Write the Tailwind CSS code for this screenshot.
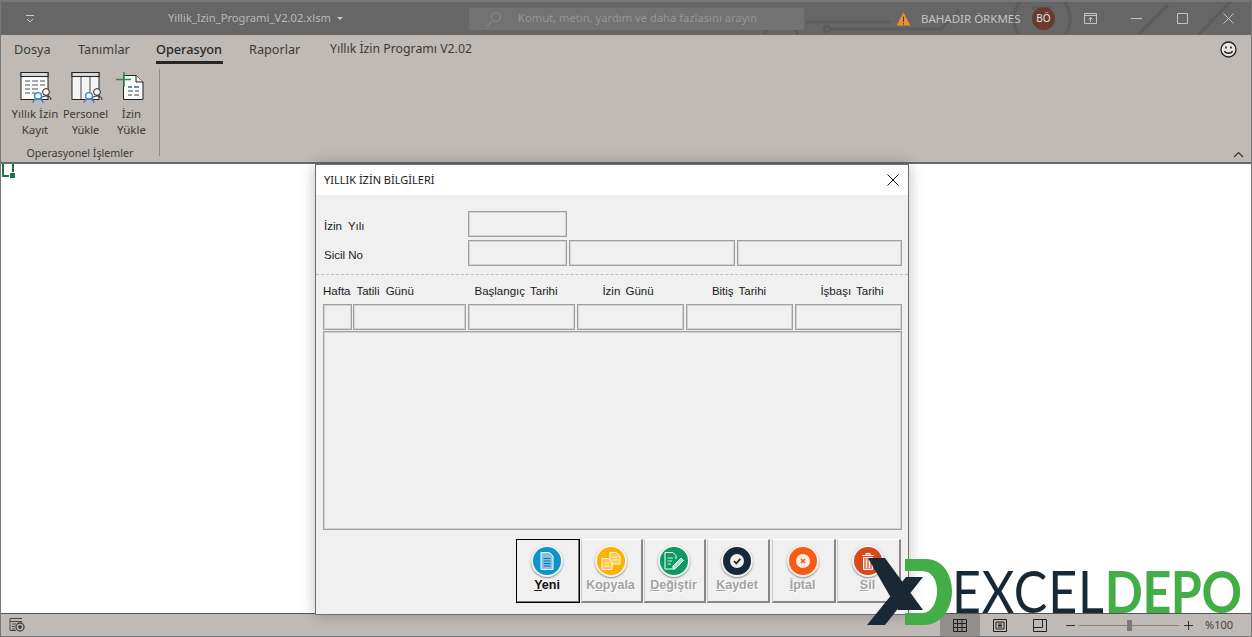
<!DOCTYPE html>
<html lang="tr">
<head>
<meta charset="UTF-8">
<title>Yillik_Izin_Programi_V2.02.xlsm</title>
<script src="https://cdn.jsdelivr.net/npm/@tailwindcss/browser@4"></script>
</head>
<body class="bg-white font-['Noto_Sans',sans-serif]">
<div class="relative w-[1252px] h-[637px] overflow-hidden flex flex-col border-x border-b border-[#777] bg-white">

  <!-- Title bar -->
  <header class="relative h-[35px] shrink-0 bg-[#666666] border-t-2 border-[#777] flex items-center text-[11.2px] text-[#b9b9b9]">
    <svg class="absolute left-[750px] top-0" width="501" height="33" fill="none" stroke="#5c5c5c" stroke-width="3">
      <path d="M55 20H140M13 33a18 18 0 0 1 34 0M78 27H190L208 8M268 33a28 28 0 1 1 46 0M280 6H298V24M387 33L417 3M447 33L498 -20"/>
      <circle cx="76" cy="27" r="3"/>
    </svg>
    <svg class="relative ml-[24px] shrink-0" width="10" height="10" fill="none" stroke="#c8c8c8"><path d="M1 1.5H9M2 5L5 8L8 5"/></svg>
    <span class="relative ml-[133px] w-[169px] shrink-0 whitespace-nowrap">Yillik_Izin_Programi_V2.02.xlsm</span>
    <svg class="relative shrink-0" width="6" height="4"><path d="M0 0H6L3 3Z" fill="#c8c8c8"/></svg>
    <div class="relative ml-[126px] w-[335px] h-[22px] shrink-0 bg-[#727272] flex items-center text-[#979797]">
      <svg class="ml-[17px] shrink-0" width="16" height="16" fill="none" stroke="#8c8c8c"><circle cx="10" cy="6" r="4.5"/><path d="M6.5 9.5L1 15"/></svg>
      <span class="ml-[16px] whitespace-nowrap">Komut, metin, yardım ve daha fazlasını arayın</span>
    </div>
    <svg class="relative ml-[92px] shrink-0" width="15" height="14"><path d="M7.5 0.5L14.5 13.5H0.5Z" fill="#e8902c"/><path d="M7 4.5H8V10H7ZM7 11H8V12.5H7Z" fill="#4a3a20"/></svg>
    <span class="relative ml-[10px] w-[100px] shrink-0 whitespace-nowrap text-[11.5px] text-[#c4c4c4]">BAHADIR ÖRKMES</span>
    <div class="relative ml-[11px] w-[23px] h-[23px] shrink-0 rounded-full bg-[#6b3a2e] flex items-center justify-center text-[10px] text-[#e4e4e4]">BÖ</div>
    <svg class="relative ml-[29px] shrink-0" width="13" height="11" fill="none" stroke="#c4c4c4"><path d="M0.5 0.5H12.5V10.5H0.5ZM0.5 2.5H12.5M6.5 9V4.5M4.5 6.5L6.5 4.5L8.5 6.5"/></svg>
    <svg class="relative ml-[34px] shrink-0" width="11" height="2"><path d="M0 0.5H11" stroke="#c4c4c4"/></svg>
    <svg class="relative ml-[35px] shrink-0" width="11" height="11" fill="none"><path d="M0.5 0.5H10.5V10.5H0.5Z" stroke="#c4c4c4"/></svg>
    <svg class="relative ml-[35px] shrink-0" width="11" height="11"><path d="M0.5 0.5L10.5 10.5M10.5 0.5L0.5 10.5" stroke="#c4c4c4"/></svg>
  </header>

  <!-- Ribbon -->
  <section class="relative h-[127px] shrink-0 bg-[#bfbab6] text-[#3c3a38]">
    <nav class="h-[29px] flex items-center pl-[13px] text-[12.7px]">
      <span class="w-[64px]">Dosya</span>
      <span class="w-[78px]">Tanımlar</span>
      <span class="w-[93px] h-[29px] relative flex items-center font-medium text-[#262626]">Operasyon<i class="absolute left-0 bottom-0 w-[67px] h-[3px] bg-[#262626]"></i></span>
      <span class="w-[81px]">Raporlar</span>
      <span class="text-[12.3px]">Yıllık İzin Programı V2.02</span>
    </nav>
    <svg class="absolute left-[1219px] top-[6px]" width="17" height="17" fill="none" stroke="#222" stroke-width="1.3"><circle cx="8.5" cy="8.5" r="7.5" fill="#e9e7e4"/><path d="M4.5 10c1 3 7 3 8 0"/><path d="M6 5.5v2M11 5.5v2" stroke-width="1.6"/></svg>
    <div class="flex h-[98px]">
      <div class="w-[158px] shrink-0 flex flex-col">
        <div class="flex h-[79px] pl-[9px] pt-[8px] text-[11.5px] leading-[16px] text-center text-[#3c3a38]">
          <div class="w-[50px] flex flex-col items-center">
            <svg width="32" height="31" fill="none" class="mr-[-2px]">
              <rect x="1" y="0.5" width="27" height="27" fill="#fafafa" stroke="#222"/><rect x="1" y="0.5" width="27" height="4" fill="#d8d8d8" stroke="#222"/>
              <path d="M5 9h5M12 9h6M20 9h5M5 13h5M12 13h6M20 13h5M5 17h5M12 17h6M5 21h5M12 21h3" stroke="#555"/>
              <circle cx="26" cy="20" r="3.4" fill="#f4f4f4" stroke="#222"/><path d="M21 28c0-3 2-4 5-4s5 1 5 4" stroke="#222"/>
              <circle cx="18" cy="24" r="3.4" fill="#f4f4f4" stroke="#3f7fcb" stroke-width="1.4"/><path d="M13 31c0-3 2-4 5-4s5 1 5 4" stroke="#3f7fcb" stroke-width="1.4"/>
            </svg>
            <span class="mt-[3px] whitespace-nowrap">Yıllık İzin<br>Kayıt</span>
          </div>
          <div class="w-[51px] flex flex-col items-center">
            <svg width="32" height="31" fill="none" class="mr-[-2px]">
              <rect x="1" y="0.5" width="27" height="27" fill="#f2f5f3" stroke="#222"/><rect x="1" y="0.5" width="27" height="4" fill="#d8d8d8" stroke="#222"/>
              <path d="M10 5v22M19 5v22" stroke="#444"/>
              <circle cx="26" cy="20" r="3.4" fill="#f4f4f4" stroke="#222"/><path d="M21 28c0-3 2-4 5-4s5 1 5 4" stroke="#222"/>
              <circle cx="18" cy="24" r="3.4" fill="#f4f4f4" stroke="#3f7fcb" stroke-width="1.4"/><path d="M13 31c0-3 2-4 5-4s5 1 5 4" stroke="#3f7fcb" stroke-width="1.4"/>
            </svg>
            <span class="mt-[3px] whitespace-nowrap text-[11px]">Personel<br>Yükle</span>
          </div>
          <div class="w-[41px] flex flex-col items-center">
            <svg width="28" height="31" fill="none" class="ml-[-4px]">
              <path d="M7.5 3.5H20L27 10V27.5H7.5Z" fill="#fafafa" stroke="#222"/><path d="M20 3.5V10H27" fill="#e8e8e8" stroke="#222"/>
              <path d="M12 15h4M18 15h5M12 19h5M19 19h4M12 23h4M18 23h5" stroke="#444"/><path d="M12 15h4M18 15h5" stroke="#2f78c4"/>
              <path d="M8 0V15M0 7.5H15" stroke="#2c8a4b" stroke-width="1.5"/>
            </svg>
            <span class="mt-[3px] whitespace-nowrap">İzin<br>Yükle</span>
          </div>
        </div>
        <div class="mt-[2px] text-[10.7px] text-center leading-[16px] text-[#3c3a38]">Operasyonel İşlemler</div>
      </div>
      <div class="w-px h-[87px] mt-[5px] bg-[#8d8a87]"></div>
    </div>
    <svg class="absolute left-[1232px] top-[116px]" width="11" height="7" fill="none" stroke="#333" stroke-width="1.2"><path d="M1 6L5.5 1.5L10 6"/></svg>
  </section>

  <!-- Sheet -->
  <main class="relative flex-1 bg-white border-t-2 border-[#6a6a6a]">
    <svg class="absolute left-[1px] top-0" width="14" height="15" fill="none" stroke="#1f7246" stroke-width="2">
      <path d="M1 0V12H7M11 0V8"/><rect x="8" y="9" width="5" height="5" fill="#1f7246" stroke="none"/>
    </svg>
  </main>

  <!-- Status bar -->
  <footer class="relative h-[23px] shrink-0 bg-[#bfbab6] border-t border-[#555] flex items-center">
    <svg class="ml-[8px] shrink-0" width="16" height="14" fill="none" stroke="#444"><path d="M1 .5H13M1 3.5H13M1 .5V12.5H7M3 6h4M3 8.5h3M3 11h3"/><circle cx="11" cy="9" r="4" stroke-width="1.3"/><circle cx="11" cy="9" r="1.5" fill="#444"/></svg>
    <div class="ml-[915px] w-[40px] h-[22px] shrink-0 bg-[#918e8b] flex items-center justify-center">
      <svg width="14" height="13" fill="none" stroke="#222"><path d="M.5 .5H13.5V12.5H.5ZM.5 4.5H13.5M.5 8.5H13.5M4.5 .5V12.5M9 .5V12.5"/></svg>
    </div>
    <div class="w-[40px] flex items-center justify-center">
      <svg width="14" height="13" fill="none" stroke="#222"><path d="M.5 .5H13.5V12.5H.5ZM3 3H11V10H3ZM5 5H9M5 6.5H9M5 8H9"/></svg>
    </div>
    <div class="w-[40px] flex items-center justify-center">
      <svg width="14" height="13" fill="none" stroke="#222"><path d="M.5 .5H13.5V12.5H.5ZM.5 8.5H9.5V.5"/></svg>
    </div>
    <svg class="ml-[6px] shrink-0" width="9" height="1"><path d="M0 .5H9" stroke="#333"/></svg>
    <div class="relative ml-[4px] w-[100px] h-px shrink-0 bg-[#85827f]"><i class="absolute left-[48px] top-[-5px] w-[5px] h-[11px] bg-[#7d7a77]"></i></div>
    <svg class="ml-[5px] shrink-0" width="9" height="9"><path d="M0 4.5H9M4.5 0V9" stroke="#333"/></svg>
    <span class="ml-[12px] text-[11px] text-[#444]">%100</span>
  </footer>

  <!-- Dialog over the sheet -->
  <div class="absolute left-[314px] top-[164px] w-[594px] h-[451px] border border-[#6e6e6e] bg-[#f0f0f0] flex flex-col shadow-[0_0_14px_rgba(0,0,0,.25)] font-['Liberation_Sans',sans-serif] text-[11.5px] text-[#1a1a1a]">
    <div class="h-[30px] shrink-0 bg-white flex items-center justify-between pl-[8px] pr-[9px]">
      <span class="font-['Noto_Sans',sans-serif] text-[11px]">YILLIK İZİN BİLGİLERİ</span>
      <svg width="12" height="12" fill="none" stroke="#111"><path d="M.5 .5L11.5 11.5M11.5 .5L.5 11.5"/></svg>
    </div>
    <div class="flex-1 flex flex-col">
      <div class="flex h-[26px] mt-[16px] pl-[8px]">
        <span class="w-[144px] pt-[7px] [word-spacing:3px]">İzin Yılı</span>
        <div class="w-[99px] border border-[#a0a0a0] shadow-[inset_0_0_0_1px_#d2d2d2]"></div>
      </div>
      <div class="flex h-[26px] mt-[3px] pl-[8px] gap-[2px]">
        <span class="w-[142px] pt-[7px]">Sicil No</span>
        <div class="w-[99px] border border-[#a0a0a0] shadow-[inset_0_0_0_1px_#d2d2d2]"></div>
        <div class="w-[166px] border border-[#a0a0a0] shadow-[inset_0_0_0_1px_#d2d2d2]"></div>
        <div class="w-[165px] border border-[#a0a0a0] shadow-[inset_0_0_0_1px_#d2d2d2]"></div>
      </div>
      <div class="mt-[8px] border-t border-dashed border-[#c9b9a8]"></div>
      <div class="flex mt-[9px] h-[15px] pl-[7px] leading-[15px] [word-spacing:2px]">
        <span class="w-[140px] shrink-0 whitespace-nowrap [word-spacing:3px]">Hafta Tatili Günü</span>
        <span class="w-[106px] shrink-0 text-center whitespace-nowrap">Başlangıç Tarihi</span>
        <span class="w-[118px] shrink-0 text-center whitespace-nowrap">İzin Günü</span>
        <span class="w-[104px] shrink-0 text-center whitespace-nowrap">Bitiş Tarihi</span>
        <span class="w-[122px] shrink-0 text-center whitespace-nowrap">İşbaşı Tarihi</span>
      </div>
      <div class="flex h-[26px] mt-[5px] ml-[7px] gap-[2px]">
        <div class="w-[29px] border border-[#a0a0a0] shadow-[inset_0_0_0_1px_#d2d2d2] mr-[-1px]"></div>
        <div class="w-[113px] border border-[#a0a0a0] shadow-[inset_0_0_0_1px_#d2d2d2]"></div>
        <div class="w-[107px] border border-[#a0a0a0] shadow-[inset_0_0_0_1px_#d2d2d2]"></div>
        <div class="w-[107px] border border-[#a0a0a0] shadow-[inset_0_0_0_1px_#d2d2d2]"></div>
        <div class="w-[107px] border border-[#a0a0a0] shadow-[inset_0_0_0_1px_#d2d2d2]"></div>
        <div class="w-[107px] border border-[#a0a0a0] shadow-[inset_0_0_0_1px_#d2d2d2]"></div>
      </div>
      <div class="h-[199px] mt-[1px] ml-[7px] w-[579px] border border-[#a0a0a0] shadow-[inset_0_0_0_1px_#d2d2d2]"></div>
      <div class="flex mt-[9px] ml-[200px] h-[64px] font-bold text-[12.5px] leading-[14px] text-[#a3a3a3] [text-shadow:1px_1px_0_#fff]">
        <div class="w-[64px] border border-black shadow-[inset_-1px_-1px_0_#777] bg-[#f0f0f0] flex flex-col items-center pt-[5px] pr-[2px] text-[#111] [text-shadow:none]">
          <div class="w-[32px] h-[32px] shrink-0 rounded-full bg-[#0f93cf] border-2 border-[#f5f3ee] shadow-[0_1px_2px_#888] flex items-center justify-center">
            <svg width="14" height="18" fill="none" stroke="#fff"><path d="M1 .5H9.5L13 4V17.5H1Z" fill="#7fc4e8"/><path d="M3.5 6.5H10.5M3.5 9H10.5M3.5 11.5H10.5M3.5 14H10.5" stroke="#0f6f9f"/></svg>
          </div>
          <span class="mt-[1px]"><u>Y</u>eni</span>
        </div>
        <div class="w-[62px] ml-[1px] border border-t-[#fff] border-l-[#ccc] border-r-2 border-b-2 border-r-[#888] border-b-[#888] flex flex-col items-center pt-[5px] pr-[2px]">
          <div class="w-[32px] h-[32px] shrink-0 rounded-full bg-[#ffb000] border-2 border-[#f5f3ee] shadow-[0_1px_2px_#888] flex items-center justify-center">
            <svg width="20" height="18" fill="#ffc94a" stroke="#fff"><path d="M9 .5H15L19 4V12H9Z"/><path d="M1 6.5H7L11 10V17.5H1Z"/><path d="M11.5 5H16.5M11.5 8H16.5M3.5 11H8.5M3.5 14H8.5" stroke="#fff3d0"/></svg>
          </div>
          <span class="mt-[1px]">K<u>o</u>pyala</span>
        </div>
        <div class="w-[62px] ml-[1px] border border-t-[#fff] border-l-[#ccc] border-r-2 border-b-2 border-r-[#888] border-b-[#888] flex flex-col items-center pt-[5px] pr-[2px]">
          <div class="w-[32px] h-[32px] shrink-0 rounded-full bg-[#0a9a62] border-2 border-[#f5f3ee] shadow-[0_1px_2px_#888] flex items-center justify-center">
            <svg width="20" height="18" fill="none" stroke="#fff"><path d="M11 14V17H1V.5H9L12 3.5V7"/><path d="M3.5 6H9M3.5 9H8M3.5 12H7" stroke="#cfeee0"/><path d="M9 14L17 6L19.5 8.5L11.5 16.5H9Z" fill="#a5e0c5"/></svg>
          </div>
          <span class="mt-[1px]"><u>D</u>eğiştir</span>
        </div>
        <div class="w-[63px] ml-[1px] border border-t-[#fff] border-l-[#ccc] border-r-2 border-b-2 border-r-[#888] border-b-[#888] flex flex-col items-center pt-[5px] pr-[2px]">
          <div class="w-[32px] h-[32px] shrink-0 rounded-full bg-[#17283a] border-2 border-[#f5f3ee] shadow-[0_1px_2px_#888] flex items-center justify-center">
            <svg width="14" height="14"><circle cx="7" cy="7" r="7" fill="#f2efe6"/><path d="M4 7L6.3 9.5L10.3 4.8" fill="none" stroke="#17283a" stroke-width="1.8"/></svg>
          </div>
          <span class="mt-[1px]"><u>K</u>aydet</span>
        </div>
        <div class="w-[64px] ml-[2px] border border-t-[#fff] border-l-[#ccc] border-r-2 border-b-2 border-r-[#888] border-b-[#888] flex flex-col items-center pt-[5px] pr-[2px]">
          <div class="w-[32px] h-[32px] shrink-0 rounded-full bg-[#fa5a14] border-2 border-[#f5f3ee] shadow-[0_1px_2px_#888] flex items-center justify-center">
            <svg width="14" height="14"><circle cx="7" cy="7" r="7" fill="#f8ede2"/><path d="M5 5L9 9M9 5L5 9" stroke="#fa5a14" stroke-width="1.6"/></svg>
          </div>
          <span class="mt-[1px]"><u>İ</u>ptal</span>
        </div>
        <div class="w-[64px] ml-[1px] border border-t-[#fff] border-l-[#ccc] border-r-2 border-b-2 border-r-[#888] border-b-[#888] flex flex-col items-center pt-[5px] pr-[2px]">
          <div class="w-[32px] h-[32px] shrink-0 rounded-full bg-[#d9481c] border-2 border-[#f5f3ee] shadow-[0_1px_2px_#888] flex items-center justify-center">
            <svg width="14" height="17" fill="#e8876a" stroke="#fff"><path d="M1 2.5H13M5 2.5V.5H9V2.5"/><path d="M2.5 4.5H11.5V16.5H2.5Z"/><path d="M5.5 6.5V15M8.5 6.5V15"/></svg>
          </div>
          <span class="mt-[1px]"><u>S</u>il</span>
        </div>
      </div>
    </div>
  </div>

  <!-- Watermark logo -->
  <div class="absolute left-[865px] top-[558px] h-[68px] w-[385px] flex items-start pointer-events-none">
    <svg width="92" height="68" class="shrink-0">
      <path d="M39 1H60C78 1 86 18 86 33C86 50 76 67 58 67H39V55H56C66 55 71 44 71 33C71 22 66 13 56 13H39Z" fill="#43ad47"/>
      <path d="M2 0H19L57 52H32Z" fill="#182935"/>
      <path d="M1 67H19L57 19H40Z" fill="#182935"/>
    </svg>
    <span class="mt-[8px] ml-[-6px] origin-left scale-x-[0.865] font-['Lato',sans-serif] text-[58px] leading-[50px] tracking-[1px] text-[#182935] whitespace-nowrap">EXCEL<span class="text-[#43ad47] font-bold tracking-[-0.5px]">DEPO</span></span>
  </div>
</div>
</body>
</html>
